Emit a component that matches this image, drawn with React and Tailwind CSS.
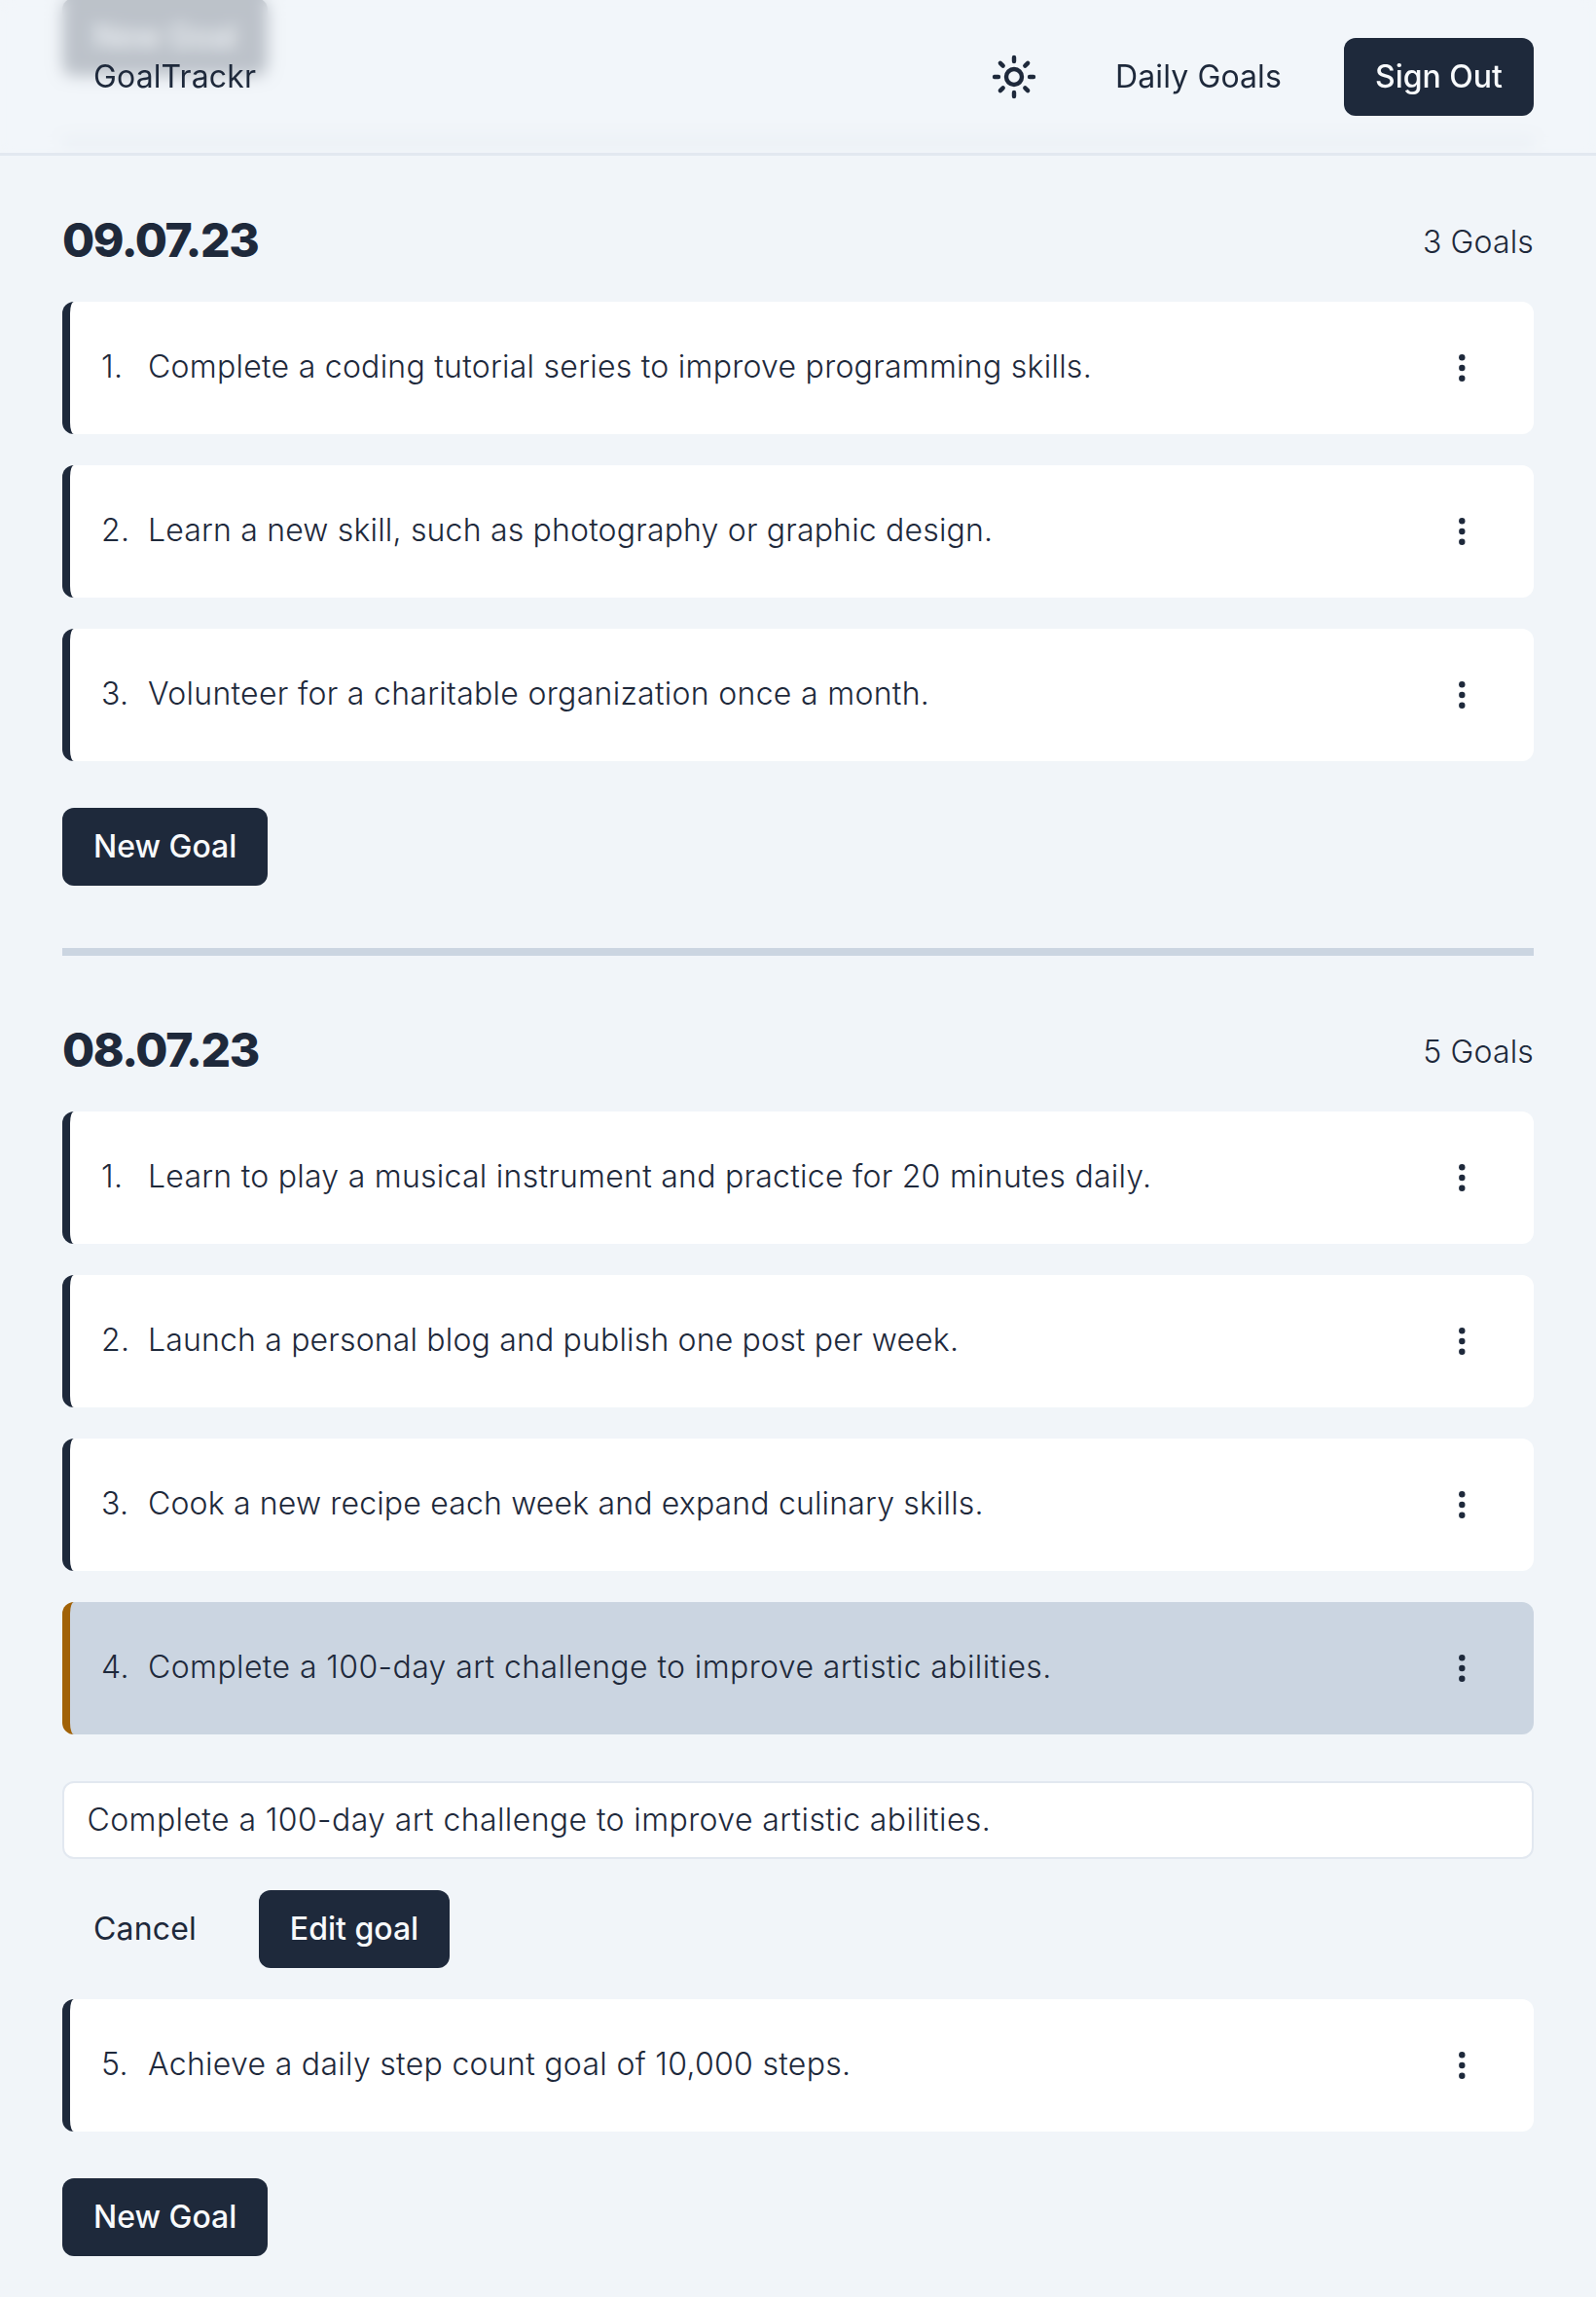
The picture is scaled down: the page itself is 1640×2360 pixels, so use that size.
import React from "react";
import { Sun } from "lucide-react";

const sections = [
  {
    date: "09.07.23",
    goals: [
      { text: "Complete a coding tutorial series to improve programming skills.", tracking: "tracking-[0.26px]" },
      { text: "Learn a new skill, such as photography or graphic design.", tracking: "tracking-[0.18px]" },
      { text: "Volunteer for a charitable organization once a month.", tracking: "tracking-[0.3px]" },
    ],
  },
  {
    date: "08.07.23",
    editing: 3,
    goals: [
      { text: "Learn to play a musical instrument and practice for 20 minutes daily.", tracking: "tracking-[0.26px]" },
      { text: "Launch a personal blog and publish one post per week.", tracking: "tracking-[0.17px]" },
      { text: "Cook a new recipe each week and expand culinary skills.", tracking: "tracking-[0.16px]" },
      { text: "Complete a 100-day art challenge to improve artistic abilities.", tracking: "tracking-[0.4px]" },
      { text: "Achieve a daily step count goal of 10,000 steps.", tracking: "tracking-[0.3px]" },
    ],
  },
];

function Button({ children }) {
  return (
    <button className="h-20 shrink-0 rounded-xl bg-[#1e293b] px-8 text-[32px] leading-[48px] font-medium whitespace-nowrap text-[#f8fafc]">
      {children}
    </button>
  );
}

function Dots() {
  return (
    <svg className="mr-[58px] h-8 w-8 shrink-0 fill-[#1e293b]" viewBox="0 0 32 32">
      <circle cx="16.3" cy="5.3" r="3.2" />
      <circle cx="16.3" cy="16" r="3.2" />
      <circle cx="16.3" cy="26.7" r="3.2" />
    </svg>
  );
}

function Goal({ index, goal, active }) {
  return (
    <li
      className={
        active
          ? "flex h-[136px] items-center rounded-xl border-l-8 border-[#a16207] bg-[#cbd5e1] pl-8"
          : "flex h-[136px] items-center rounded-xl border-l-8 border-[#1e293b] bg-white pl-8"
      }
    >
      <span className="w-12 shrink-0 pb-0.5 tracking-[0.4px]">{index}.</span>
      <span className={`flex-1 pb-0.5 whitespace-nowrap ${goal.tracking}`}>{goal.text}</span>
      <Dots />
    </li>
  );
}

function EditForm({ value }) {
  return (
    <li className="flex flex-col gap-8 pt-4">
      <input
        className="h-20 w-full rounded-xl border-2 border-[#e2e8f0] bg-white px-[23.5px] pb-0.5 font-light tracking-[0.4px] outline-none"
        defaultValue={value}
      />
      <div className="flex gap-8">
        <button className="h-20 px-8 font-normal tracking-[0.15px]">Cancel</button>
        <Button>Edit goal</Button>
      </div>
    </li>
  );
}

function Section({ date, goals, editing }) {
  return (
    <section className="pt-16">
      <div className="mb-8 flex h-16 items-center justify-between">
        <h2 className="pt-0.5 text-[48px] leading-[64px] font-extrabold tracking-[-1.4px]">{date}</h2>
        <span className="pt-1.5 tracking-[0.15px]">{goals.length} Goals</span>
      </div>
      <ul className="mb-12 flex flex-col gap-8">
        {goals.map((goal, i) => (
          <React.Fragment key={goal.text}>
            <Goal index={i + 1} goal={goal} active={i === editing} />
            {i === editing && <EditForm value={goal.text} />}
          </React.Fragment>
        ))}
      </ul>
      <Button>New Goal</Button>
    </section>
  );
}

export default function App() {
  return (
    <div className="h-[2360px] overflow-hidden bg-[#f1f5f9] font-['Inter',sans-serif] text-[32px] leading-[48px] font-light text-[#1e293b]">
      <header className="fixed inset-x-0 top-0 z-10 flex h-40 items-center border-b-[3px] border-[#e2e8f0] bg-[#f1f5f9]/75 px-16 font-normal backdrop-blur-[8px]">
        <span className="flex-1 px-8 tracking-[0.13px]">GoalTrackr</span>
        <Sun size={48} strokeWidth={2.2} className="mr-20" />
        <span className="mr-16 tracking-[0.12px]">Daily Goals</span>
        <Button>Sign Out</Button>
      </header>
      <main className="-mt-0.5 px-16">
        <Button>New Goal</Button>
        <hr className="mt-16 border-t-8 border-[#cbd5e1]" />
        <Section {...sections[0]} />
        <hr className="mt-16 border-t-8 border-[#cbd5e1]" />
        <Section {...sections[1]} />
      </main>
    </div>
  );
}
